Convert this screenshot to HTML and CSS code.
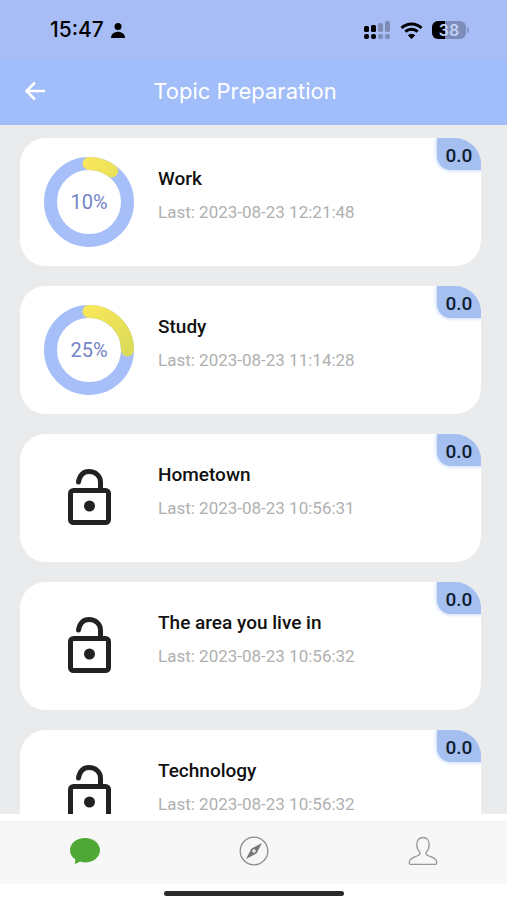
FILE: index.html
```html
<!DOCTYPE html>
<html lang="en">
<head>
<meta charset="utf-8">
<meta name="viewport" content="width=device-width, initial-scale=1">
<title>Topic Preparation</title>
<link rel="stylesheet" href="styles.css">
</head>
<body>
<svg class="defs" aria-hidden="true">
  <defs>
    <linearGradient id="progress" x1="45" y1="0" x2="90" y2="52" gradientUnits="userSpaceOnUse">
      <stop offset="0" stop-color="#f9e75a"/>
      <stop offset="1" stop-color="#d8da58"/>
    </linearGradient>
    <symbol id="lock" viewBox="0 0 90 90">
      <rect x="26.500" y="37.500" width="38" height="32" rx="3" fill="none" stroke="#222" stroke-width="5"/>
      <path d="M34.500 29C36 21 40 18.500 45 18.500C51.500 18.500 56.500 23 56.500 29V37" fill="none" stroke="#222" stroke-width="5" stroke-linecap="round"/>
      <circle cx="45.500" cy="53" r="5.500" fill="#222"/>
    </symbol>
  </defs>
</svg>

<div class="status">
  <div class="status-left">
    <span class="time">15:47</span>
    <svg width="14" height="15" viewBox="0 0 14 15"><circle cx="7" cy="3.500" r="3.500"/><path d="M0 15C0 6.500 14 6.500 14 15Z"/></svg>
  </div>
  <div class="status-right">
    <svg width="27" height="18" viewBox="0 0 27 18">
      <g><rect x="0" y="5" width="5" height="6" rx="1.500"/><rect x="0" y="13" width="5" height="5" rx="2"/><rect x="7" y="4" width="5" height="7" rx="1.500"/><rect x="7" y="13" width="5" height="5" rx="2"/></g>
      <g opacity=".25"><rect x="14" y="2" width="5" height="9" rx="2"/><rect x="14" y="13" width="5" height="5" rx="2"/><rect x="21" y="0" width="5" height="11" rx="2"/><rect x="21" y="13" width="5" height="5" rx="2"/></g>
    </svg>
    <svg width="23" height="17" viewBox="0 0 23 17">
      <path d="M1.500 6C7 .5 16 .5 21.500 6M5.300 9.700C8.800 6.400 14.200 6.400 17.700 9.700" fill="none" stroke="#000" stroke-width="3"/>
      <path d="M11.500 17L7.800 13.300C9.800 11.400 13.200 11.400 15.200 13.300Z"/>
    </svg>
    <div class="battery"><span class="level">38</span></div>
  </div>
</div>

<header class="header">
  <button class="back" type="button" aria-label="Back">
    <svg width="22" height="20" viewBox="0 0 22 20"><path d="M21 10H2.500M11 1.500L2.500 10L11 18.500" fill="none" stroke="#fff" stroke-width="2.600"/></svg>
  </button>
  <h1>Topic Preparation</h1>
</header>

<main class="list">
  <article class="card">
    <div class="ring">
      <svg viewBox="0 0 90 90"><circle class="track" cx="45" cy="45" r="38.500"/><path class="bar" d="M45 6.500A38.500 38.500 0 0 1 67.600 13.900"/></svg>
      <span>10%</span>
    </div>
    <div class="info"><h2>Work</h2><p>Last: 2023-08-23 12:21:48</p></div>
    <span class="score">0.0</span>
  </article>
  <article class="card">
    <div class="ring">
      <svg viewBox="0 0 90 90"><circle class="track" cx="45" cy="45" r="38.500"/><path class="bar" d="M45 6.500A38.500 38.500 0 0 1 83.500 45"/></svg>
      <span>25%</span>
    </div>
    <div class="info"><h2>Study</h2><p>Last: 2023-08-23 11:14:28</p></div>
    <span class="score">0.0</span>
  </article>
  <article class="card">
    <div class="ring"><svg><use href="#lock"/></svg></div>
    <div class="info"><h2>Hometown</h2><p>Last: 2023-08-23 10:56:31</p></div>
    <span class="score">0.0</span>
  </article>
  <article class="card">
    <div class="ring"><svg><use href="#lock"/></svg></div>
    <div class="info"><h2>The area you live in</h2><p>Last: 2023-08-23 10:56:32</p></div>
    <span class="score">0.0</span>
  </article>
  <article class="card">
    <div class="ring"><svg><use href="#lock"/></svg></div>
    <div class="info"><h2>Technology</h2><p>Last: 2023-08-23 10:56:32</p></div>
    <span class="score">0.0</span>
  </article>
</main>

<nav class="tabs">
  <a href="#chat" aria-label="Chat">
    <svg width="30" height="30" viewBox="0 0 30 30"><path d="M15 2C23.300 2 30 7.400 30 14.200S23.300 26.400 15 26.400C12.800 26.400 11.200 26.100 9.800 25.600C8.500 26.800 6.700 27.700 4.500 27.800C5.400 26.500 5.500 24.500 5 23.100C2 21 0 17.900 0 14.200C0 7.400 6.700 2 15 2Z" fill="#4fa836"/></svg>
  </a>
  <a href="#explore" aria-label="Explore">
    <svg width="30" height="30" viewBox="0 0 30 30"><circle cx="15" cy="15" r="13.800" fill="none" stroke="#8c8c8c" stroke-width="1.300"/><path d="M23 7L17.500 17.500L7 23L12.500 12.500Z" fill="#777"/><circle cx="15" cy="15" r="1.700" fill="#f7f7f7"/></svg>
  </a>
  <a href="#profile" aria-label="Profile">
    <svg width="30" height="30" viewBox="0 0 30 30"><path d="M15 1.500C11 1.500 8.800 4.500 8.800 8.500C8.800 12 10 14.500 11.800 16.300C12.600 18.300 11.500 19 9 20C4.500 21.800 1.300 22.800 1.300 26V27.200Q1.300 28.300 2.500 28.300H27.500Q28.700 28.300 28.700 27.200V26C28.700 22.800 25.500 21.800 21 20C18.500 19 17.400 18.300 18.200 16.300C20 14.500 21.200 12 21.200 8.500C21.200 4.500 19 1.500 15 1.500Z" fill="none" stroke="#999" stroke-width="1.300"/></svg>
  </a>
</nav>
<div class="home"><span></span></div>
</body>
</html>
```
FILE: styles.css
```css
* { box-sizing: border-box; }

body {
  margin: 0;
  height: 100vh;
  display: flex;
  flex-direction: column;
  background: #fff;
  font-family: Roboto, "Liberation Sans", sans-serif;
}

h1, h2, p { margin: 0; font-weight: 400; }
svg { display: block; }
.defs { position: absolute; width: 0; height: 0; }

.status {
  flex: none;
  display: flex;
  justify-content: space-between;
  align-items: center;
  height: 60px;
  padding: 0 37px 0 50px;
  background: #a8bdf5;
}
.status-left, .status-right { display: flex; align-items: center; }
.status-left { gap: 7px; }
.status-right { gap: 9px; }
.time { font: 500 21px/24px Inter, sans-serif; }

.battery {
  position: relative;
  width: 34px;
  height: 18px;
  margin-right: 4px;
  border-radius: 6px;
  background: linear-gradient(90deg, #000 38%, #7c8dba 38%);
}
.battery::after {
  content: "";
  position: absolute;
  left: 35px;
  top: 6px;
  width: 2px;
  height: 6px;
  border-radius: 0 2px 2px 0;
  background: #8797c4;
}
.level {
  display: block;
  text-align: center;
  font: 600 16px/18px Inter, sans-serif;
  color: #c3d0f6;
}

.header {
  flex: none;
  display: grid;
  grid-template-columns: 70px 1fr 87px;
  align-items: center;
  height: 65px;
  padding-bottom: 4px;
  background: #a1bdfa;
}
.back {
  justify-self: start;
  margin-left: 24px;
  padding: 0;
  border: 0;
  background: none;
}
h1 {
  text-align: center;
  font: 400 22px/28px Inter, sans-serif;
  color: #fff;
}

.list {
  flex: 1;
  min-height: 0;
  overflow: hidden;
  display: flex;
  flex-direction: column;
  gap: 20px;
  padding: 13px 26px 0 20px;
  background: #e9ebed;
}
.card {
  position: relative;
  flex: none;
  display: flex;
  gap: 24px;
  height: 128px;
  padding: 19px 24px;
  border-radius: 26px;
  background: #fff;
  overflow: hidden;
}
.ring {
  flex: none;
  display: grid;
  place-items: center;
  width: 90px;
  height: 90px;
}
.ring > * { grid-area: 1 / 1; }
.ring svg { width: 90px; height: 90px; }
.ring span { font-size: 20px; line-height: 24px; color: #7484c6; }
.track { fill: none; stroke: #a6bff8; stroke-width: 13; }
.bar { fill: none; stroke: url(#progress); stroke-width: 13; stroke-linecap: round; }

.info { padding-top: 10px; }
h2 { font-size: 19px; line-height: 24px; font-weight: 500; color: #111; }
p { margin-top: 10px; font-size: 17px; line-height: 22px; color: #b0b0b0; }

.score {
  position: absolute;
  top: 0;
  right: 0;
  width: 44px;
  height: 32px;
  border-radius: 0 0 0 14px;
  background: #a5c0f0;
  box-shadow: 0 0 4px #a5c8f5;
  text-align: center;
  font-size: 19px;
  line-height: 35px;
  font-weight: 500;
  color: #101c30;
}

.tabs {
  flex: none;
  display: grid;
  grid-template-columns: repeat(3, 1fr);
  align-items: center;
  justify-items: center;
  height: 63px;
  margin-top: 7px;
  padding-bottom: 4px;
  border-top: 1px solid #f0f0f0;
  background: #f7f7f7;
}
.home {
  flex: none;
  display: flex;
  justify-content: center;
  height: 16px;
  padding-top: 7px;
}
.home span { width: 180px; height: 5px; border-radius: 3px; background: #2b2b2b; }
```
